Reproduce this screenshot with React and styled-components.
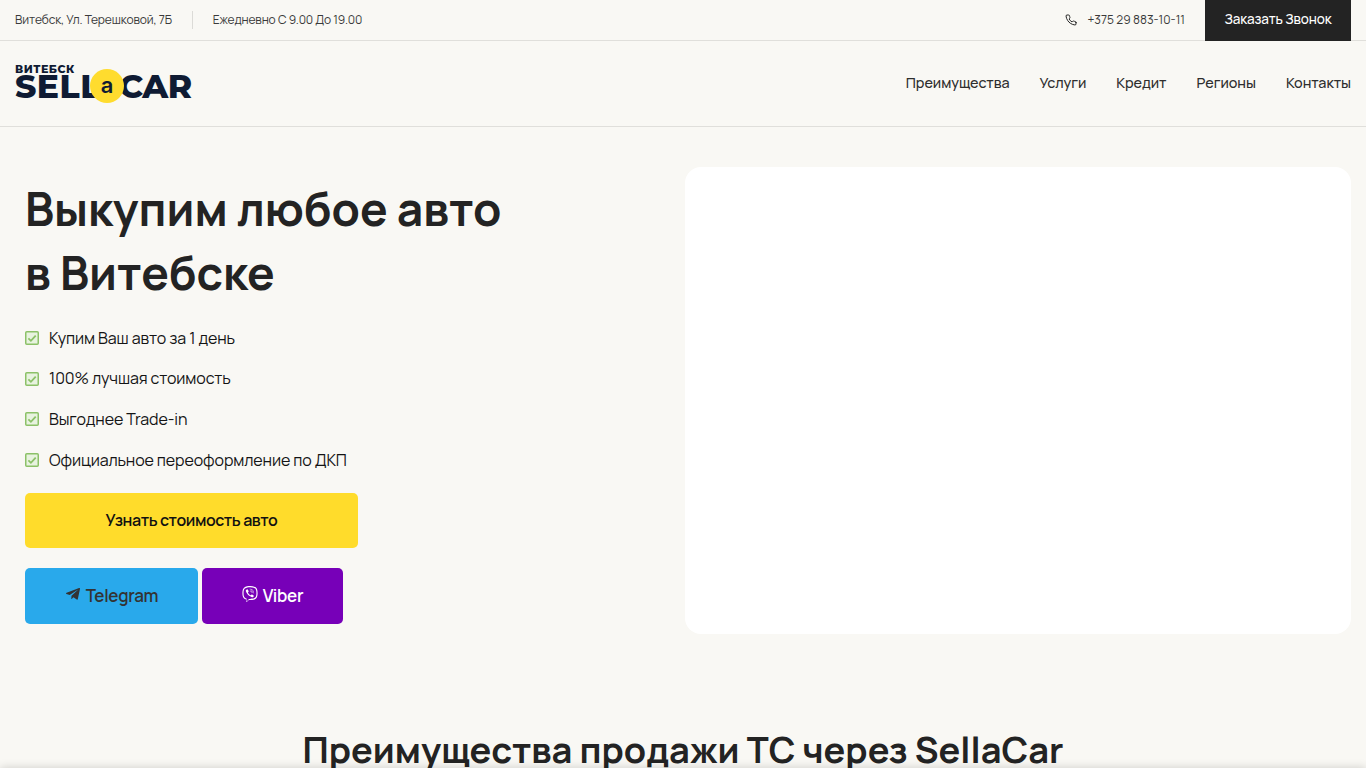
import React from "react";
import styled, { createGlobalStyle } from "styled-components";
import { FaTelegramPlane, FaViber } from "react-icons/fa";
import { FiPhone } from "react-icons/fi";

const GlobalStyle = createGlobalStyle`
  html, body {
    margin: 0;
    height: 768px;
    overflow: hidden;
    background: #f9f8f4;
  }
  * {
    box-sizing: border-box;
  }
  body {
    font-family: "Manrope", "Inter", "Noto Sans", sans-serif;
    color: #232323;
  }
`;

const TopBar = styled.div`
  display: flex;
  align-items: center;
  justify-content: space-between;
  height: 41px;
  padding: 0 15px;
  border-bottom: 1px solid #e0dfdb;
`;

const TopGroup = styled.div`
  display: flex;
  align-items: center;
  height: 100%;
`;

const TopText = styled.span`
  padding-bottom: 2px;
  font-size: 12px;
  letter-spacing: -0.12px;
  color: #3a3a3a;
`;

const TopDivider = styled.span`
  width: 1px;
  height: 18px;
  margin: 0 20px;
  background: #dcdbd7;
`;

const PhoneLink = styled.a`
  display: flex;
  align-items: center;
  gap: 10px;
  margin-right: 20px;
  padding-bottom: 1px;
  font-size: 12px;
  color: #3a3a3a;
  svg {
    width: 12px;
    height: 12px;
    color: #232323;
  }
`;

const CallButton = styled.button`
  height: 41px;
  width: 146px;
  border: 0;
  padding: 0 0 3px;
  background: #232323;
  color: #fff;
  font-family: inherit;
  font-size: 13.5px;
  font-weight: 500;
  letter-spacing: -0.13px;
`;

const Header = styled.header`
  display: flex;
  align-items: center;
  justify-content: space-between;
  height: 86px;
  padding: 0 15px;
  border-bottom: 1px solid #e0dfdb;
`;

const Logo = styled.div`
  position: relative;
  width: 178px;
  height: 40px;
  color: #0f1b33;
  font-family: "Montserrat", "Open Sans", sans-serif;
  font-weight: 800;
`;

const LogoCity = styled.span`
  position: absolute;
  left: 0;
  top: -2px;
  font-size: 11px;
  line-height: 14px;
  letter-spacing: 0.5px;
`;

const LogoWord = styled.span`
  position: absolute;
  top: 7px;
  font-size: 33px;
  line-height: 30px;
  left: ${(p) => p.$left}px;
  letter-spacing: ${(p) => p.$spacing}px;
`;

const LogoBadge = styled.span`
  position: absolute;
  left: 75px;
  top: 5px;
  width: 34px;
  height: 34px;
  border-radius: 50%;
  background: #ffdc2e;
  display: flex;
  align-items: center;
  justify-content: center;
  padding-bottom: 1px;
  font-size: 22px;
  font-weight: 600;
  font-family: "Inter", sans-serif;
`;

const Nav = styled.nav`
  display: flex;
  gap: 30px;
  padding-bottom: 2px;
`;

const NavLink = styled.a`
  font-size: 14.4px;
  font-weight: 500;
  letter-spacing: -0.05px;
  color: #2e2e2e;
`;

const Hero = styled.section`
  display: flex;
  justify-content: space-between;
  padding: 40px 15px 0 25px;
`;

const HeroLeft = styled.div`
  width: 600px;
`;

const Title = styled.h1`
  margin: 10px 0 0;
  font-size: 46px;
  line-height: 64px;
  font-weight: 700;
  color: #232323;
`;

const Perks = styled.ul`
  list-style: none;
  margin: 20px 0 0;
  padding: 0;
  display: flex;
  flex-direction: column;
  gap: 15.7px;
`;

const Perk = styled.li`
  display: flex;
  align-items: center;
  gap: 10px;
  height: 25px;
  font-size: 16px;
  letter-spacing: -0.1px;
  color: #141414;
`;

const CheckIcon = styled.svg`
  flex: none;
  margin-top: 1px;
`;

const CheckBox = () => (
  <CheckIcon width="14" height="14" viewBox="0 0 14 14" fill="none">
    <rect x="0.75" y="0.75" width="12.5" height="12.5" rx="1" fill="#e8f3df" stroke="#8cc168" strokeWidth="1.5" />
    <path d="M3.4 7.4l2.5 2.4 4.8-5.2" stroke="#8cc168" strokeWidth="1.8" />
  </CheckIcon>
);

const PriceButton = styled.button`
  display: block;
  width: 333px;
  height: 55px;
  margin-top: 21px;
  padding: 0 0 2px;
  border: 0;
  border-radius: 5px;
  background: #ffdc2b;
  color: #111;
  font-family: inherit;
  font-size: 16px;
  font-weight: 600;
  letter-spacing: -0.4px;
`;

const Messengers = styled.div`
  display: flex;
  gap: 4px;
  margin-top: 20px;
`;

const MessengerButton = styled.a`
  display: flex;
  align-items: center;
  justify-content: center;
  gap: 5px;
  width: ${(p) => p.$width}px;
  height: 56px;
  padding-bottom: 1px;
  border-radius: 5px;
  background: ${(p) => p.$bg};
  color: ${(p) => p.$color};
  font-size: 17px;
  font-weight: 600;
  letter-spacing: -0.3px;
  svg {
    width: 16px;
    height: 16px;
    margin-top: -4px;
  }
`;

const VideoCard = styled.div`
  width: 666px;
  height: 467px;
  border-radius: 16px;
  background: #fff;
`;

const Benefits = styled.h2`
  margin: 90px 0 0;
  text-align: center;
  font-size: 36.2px;
  line-height: 50px;
  font-weight: 700;
  color: #232323;
`;

const BottomShade = styled.div`
  position: fixed;
  left: 0;
  right: 0;
  bottom: -10px;
  height: 10px;
  box-shadow: 0 0 10px rgba(0, 0, 0, 0.18);
`;

const perks = [
  "Купим Ваш авто за 1 день",
  "100% лучшая стоимость",
  "Выгоднее Trade-in",
  "Официальное переоформление по ДКП",
];

const links = ["Преимущества", "Услуги", "Кредит", "Регионы", "Контакты"];

const App = () => {
  return (
    <>
      <GlobalStyle />
      <TopBar>
        <TopGroup>
          <TopText>Витебск, Ул. Терешковой, 7Б</TopText>
          <TopDivider />
          <TopText>Ежедневно С 9.00 До 19.00</TopText>
        </TopGroup>
        <TopGroup>
          <PhoneLink>
            <FiPhone />
            +375 29 883-10-11
          </PhoneLink>
          <CallButton>Заказать Звонок</CallButton>
        </TopGroup>
      </TopBar>
      <Header>
        <Logo>
          <LogoCity>ВИТЕБСК</LogoCity>
          <LogoWord $left={0} $spacing={0.5}>SELL</LogoWord>
          <LogoWord $left={104} $spacing={-0.5}>CAR</LogoWord>
          <LogoBadge>a</LogoBadge>
        </Logo>
        <Nav>
          {links.map((link) => (
            <NavLink key={link}>{link}</NavLink>
          ))}
        </Nav>
      </Header>
      <Hero>
        <HeroLeft>
          <Title>
            Выкупим любое авто
            <br />в Витебске
          </Title>
          <Perks>
            {perks.map((perk) => (
              <Perk key={perk}>
                <CheckBox />
                {perk}
              </Perk>
            ))}
          </Perks>
          <PriceButton>Узнать стоимость авто</PriceButton>
          <Messengers>
            <MessengerButton $width={173} $bg="#29a9eb" $color="#333">
              <FaTelegramPlane />
              Telegram
            </MessengerButton>
            <MessengerButton $width={141} $bg="#7700b8" $color="#fff">
              <FaViber />
              Viber
            </MessengerButton>
          </Messengers>
        </HeroLeft>
        <VideoCard />
      </Hero>
      <Benefits>Преимущества продажи ТС через SellaCar</Benefits>
      <BottomShade />
    </>
  );
};

export default App;
